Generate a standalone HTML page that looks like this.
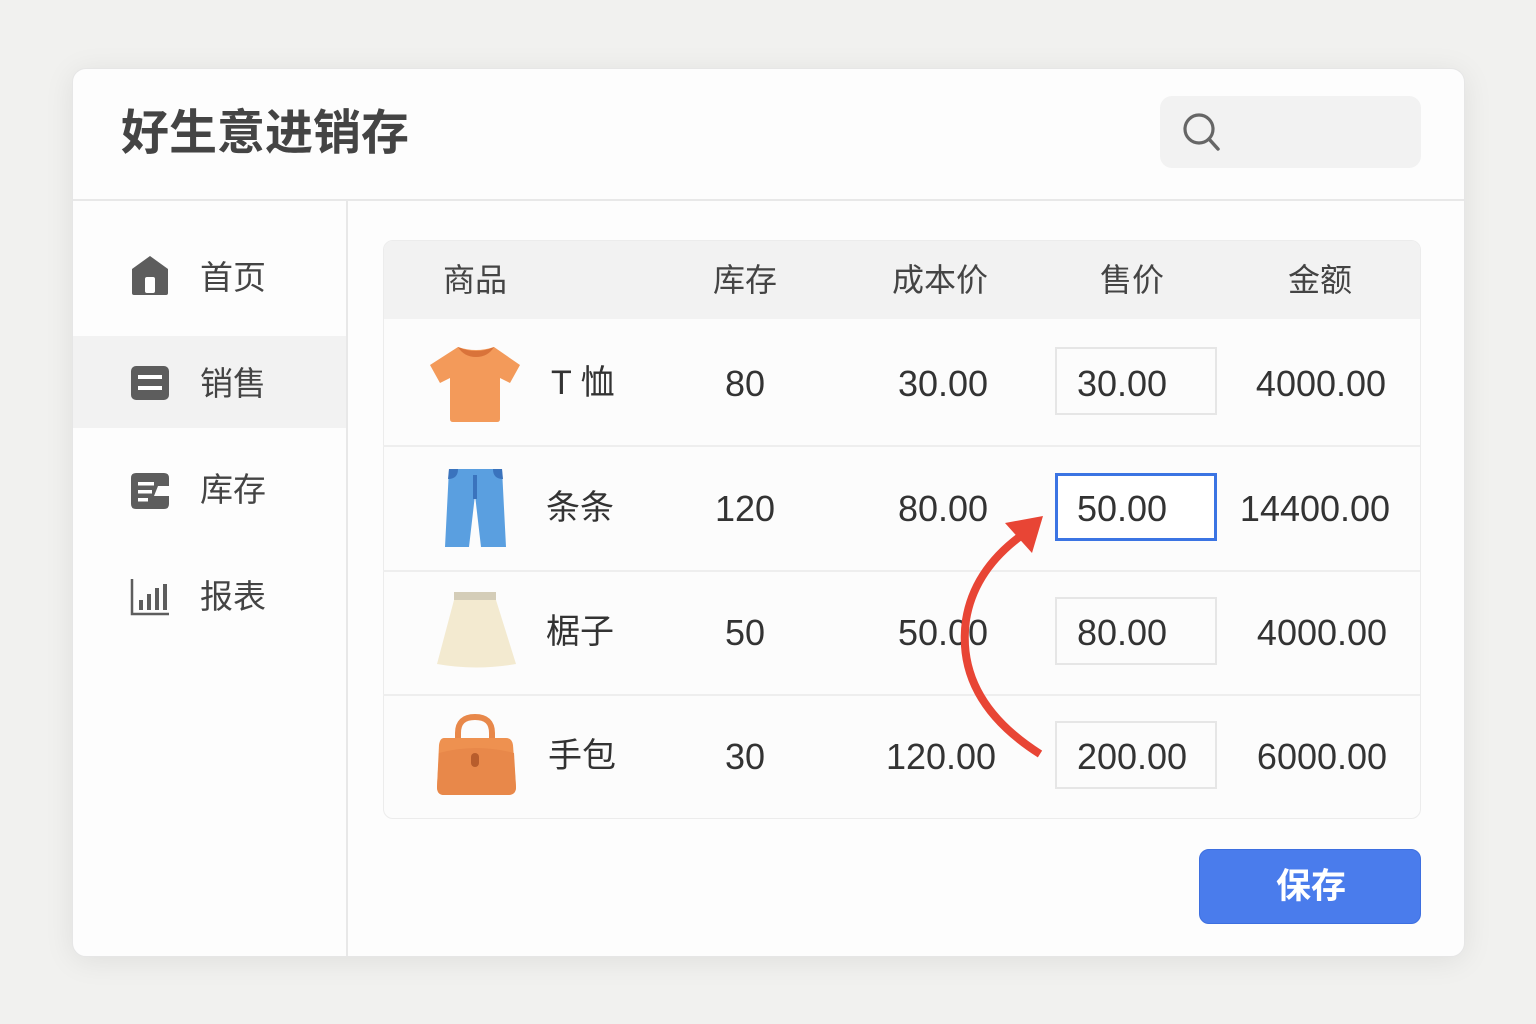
<!DOCTYPE html>
<html><head><meta charset="utf-8"><style>
*{margin:0;padding:0;box-sizing:border-box}
body{width:1536px;height:1024px;background:#f1f1ef;font-family:"Liberation Sans","Noto Sans CJK SC",sans-serif;color:#333;position:relative;overflow:hidden}
.a{position:absolute}
.card{left:72px;top:68px;width:1393px;height:889px;background:#fdfdfd;border-radius:14px;box-shadow:0 4px 30px rgba(0,0,0,0.08);border:1px solid #e6e6e6}
.t{white-space:nowrap;line-height:1}
.num{font-size:36px;color:#333;transform:translateX(-50%)}
.hd{font-size:32px;color:#444;transform:translateX(-50%)}
.inp{left:1055px;width:162px;height:68px;border:2px solid #e6e6e6;background:#fcfcfc}
.nm{font-size:34px;color:#333;left:548px}
.nav{font-size:33px;color:#444;left:200px}
.hl{left:383px;width:1037px;height:2px;background:#eeeeee}
</style></head><body>
<div class="a card"></div>
<div class="a t" style="left:121px;top:110px;font-size:48px;font-weight:bold;color:#444">好生意进销存</div>
<div class="a" style="left:1160px;top:96px;width:261px;height:72px;background:#f2f2f2;border-radius:12px"></div>
<svg class="a" style="left:1175px;top:108px" width="50" height="50"><circle cx="24" cy="21" r="14" fill="none" stroke="#666" stroke-width="3.2"/><line x1="34" y1="31" x2="43" y2="41" stroke="#666" stroke-width="3.5" stroke-linecap="round"/></svg>
<div class="a" style="left:73px;top:199px;width:1391px;height:2px;background:#e8e8e8"></div>
<div class="a" style="left:346px;top:201px;width:2px;height:755px;background:#e8e8e8"></div>
<div class="a" style="left:73px;top:336px;width:273px;height:92px;background:#f2f2f2"></div>
<svg class="a" style="left:130px;top:255px" width="42" height="42"><path d="M2 14 L20 1 L38 14 V38 Q38 40 36 40 H4 Q2 40 2 38 Z" fill="#5d5d5d"/><rect x="15" y="22" width="10" height="16" rx="2" fill="#fff"/></svg>
<svg class="a" style="left:130px;top:365px" width="42" height="36"><rect x="1" y="1" width="38" height="34" rx="5" fill="#5d5d5d"/><rect x="8" y="10" width="24" height="4" fill="#fff"/><rect x="8" y="21" width="24" height="4" fill="#fff"/></svg>
<svg class="a" style="left:130px;top:472px" width="42" height="38"><path d="M6 1 H34 Q39 1 39 6 V14 H28 L24 24 H39 V32 Q39 37 34 37 H6 Q1 37 1 32 V6 Q1 1 6 1 Z" fill="#5d5d5d"/><rect x="8" y="10" width="16" height="3.5" fill="#fff"/><rect x="8" y="18" width="14" height="3.5" fill="#fff"/><rect x="8" y="26" width="10" height="3.5" fill="#fff"/></svg>
<svg class="a" style="left:130px;top:578px" width="42" height="38"><path d="M2 1 V36 H39" fill="none" stroke="#5d5d5d" stroke-width="2.5"/><rect x="9" y="22" width="4" height="10" fill="#5d5d5d"/><rect x="17" y="16" width="4" height="16" fill="#5d5d5d"/><rect x="25" y="10" width="4" height="22" fill="#5d5d5d"/><rect x="33" y="6" width="4" height="26" fill="#5d5d5d"/></svg>
<div class="a t nav" style="top:261px">首页</div>
<div class="a t nav" style="top:367px">销售</div>
<div class="a t nav" style="top:473px">库存</div>
<div class="a t nav" style="top:580px">报表</div>
<div class="a" style="left:383px;top:240px;width:1038px;height:579px;background:#fcfcfc;border:1px solid #ececec;border-radius:10px;overflow:hidden"><div style="height:78px;background:#f2f2f2"></div></div>
<div class="a t hd" style="left:475px;top:264px">商品</div>
<div class="a t hd" style="left:745px;top:264px">库存</div>
<div class="a t hd" style="left:940px;top:264px">成本价</div>
<div class="a t hd" style="left:1132px;top:264px">售价</div>
<div class="a t hd" style="left:1320px;top:264px">金额</div>
<div class="a hl" style="top:445px"></div>
<div class="a hl" style="top:570px"></div>
<div class="a hl" style="top:694px"></div>
<svg class="a" style="left:428px;top:345px" width="96" height="80"><path d="M30 2 Q48 8 66 2 L92 20 L82 38 L72 33 V74 Q72 77 69 77 H25 Q22 77 22 74 V33 L12 38 L2 20 Z" fill="#f39a5a"/><path d="M30 2 Q48 10 66 2 Q60 12 48 12 Q36 12 30 2 Z" fill="#d9733a"/></svg>
<svg class="a" style="left:444px;top:467px" width="64" height="84"><path d="M5 2 H58 L62 80 H37 L31 28 L25 80 H1 Z" fill="#5a9fe0"/><path d="M5 2 H14 Q14 12 4 12 Z" fill="#3a73bd"/><path d="M58 2 H49 Q49 12 59 12 Z" fill="#3a73bd"/><rect x="29" y="8" width="4" height="24" fill="#3a73bd"/></svg>
<svg class="a" style="left:436px;top:591px" width="82" height="80"><rect x="18" y="1" width="42" height="8" fill="#d4cdb8"/><path d="M18 9 H60 L80 73 Q40 80 1 73 Z" fill="#f3ead0"/></svg>
<svg class="a" style="left:436px;top:713px" width="82" height="84"><path d="M22 28 V20 Q22 4 39 4 Q56 4 56 20 V28" fill="none" stroke="#e8884a" stroke-width="6"/><path d="M8 25 H70 Q76 25 77 32 L80 74 Q80 82 72 82 H8 Q1 82 1 74 L3 32 Q4 25 8 25 Z" fill="#ee9150"/><path d="M3 40 Q40 30 78 40 L80 74 Q80 82 72 82 H8 Q1 82 1 74 Z" fill="#e8884a"/><rect x="35" y="40" width="8" height="14" rx="4" fill="#b85d2c"/></svg>
<div class="a t nm" style="top:366px;left:551px">T 恤</div>
<div class="a t nm" style="top:491px;left:546px">条条</div>
<div class="a t nm" style="top:615px;left:546px">椐子</div>
<div class="a t nm" style="top:739px;left:548px">手包</div>
<div class="a t num" style="left:745px;top:366px">80</div>
<div class="a t num" style="left:745px;top:491px">120</div>
<div class="a t num" style="left:745px;top:615px">50</div>
<div class="a t num" style="left:745px;top:739px">30</div>
<div class="a t num" style="left:943px;top:366px">30.00</div>
<div class="a t num" style="left:943px;top:491px">80.00</div>
<div class="a t num" style="left:943px;top:615px">50.00</div>
<div class="a t num" style="left:941px;top:739px">120.00</div>
<div class="a inp" style="top:347px"></div>
<div class="a inp" style="top:473px;border-color:#3b74e3;border-width:3px;background:#fff"></div>
<div class="a inp" style="top:597px"></div>
<div class="a inp" style="top:721px"></div>
<div class="a t num" style="left:1122px;top:366px">30.00</div>
<div class="a t num" style="left:1122px;top:491px">50.00</div>
<div class="a t num" style="left:1122px;top:615px">80.00</div>
<div class="a t num" style="left:1132px;top:739px">200.00</div>
<div class="a t num" style="left:1321px;top:366px">4000.00</div>
<div class="a t num" style="left:1315px;top:491px">14400.00</div>
<div class="a t num" style="left:1322px;top:615px">4000.00</div>
<div class="a t num" style="left:1322px;top:739px">6000.00</div>
<svg class="a" style="left:0;top:0" width="1536" height="1024"><path d="M1040 754 Q955 700 966 620 Q974 570 1022 535" fill="none" stroke="#e84535" stroke-width="8"/><path d="M1043 516 L1005 523 L1032 553 Z" fill="#e84535"/></svg>
<div class="a" style="left:1199px;top:849px;width:222px;height:75px;background:#4a7cec;border-radius:10px;border:1px solid #3d6fe0"></div>
<div class="a t" style="left:1276px;top:869px;font-size:35px;font-weight:bold;color:#fff">保存</div>
</body></html>
